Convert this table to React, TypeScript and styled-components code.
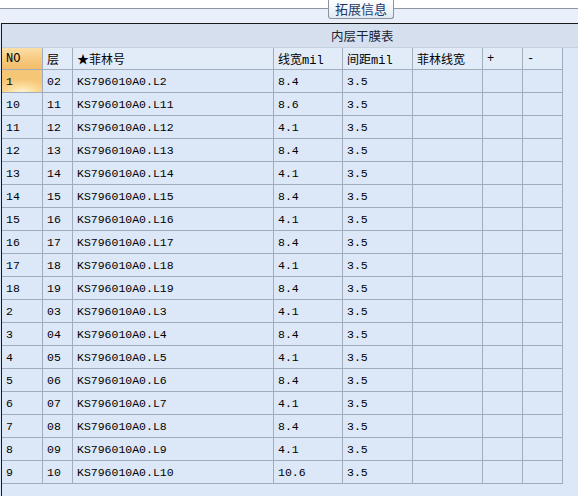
import React from "react";
import styled, { createGlobalStyle, css } from "styled-components";

const Global = createGlobalStyle`
  html, body { margin: 0; padding: 0; background: #ffffff; overflow: hidden; }
  body { width: 578px; height: 496px; }
`;

const Panel = styled.div`
  width: 578px;
  height: 496px;
  display: flex;
  flex-direction: column;
  background: #dce8f8;
  overflow: hidden;
`;

const TopBand = styled.div`
  height: 23px;
  display: flex;
  justify-content: flex-start;
  align-items: flex-start;
  padding-left: 328px;
  background: linear-gradient(
    #ffffff 0px,
    #ffffff 8px,
    #8e98a5 8px,
    #8e98a5 9px,
    #e9f0fa 9px
  );
`;

const LegendButton = styled.div`
  box-sizing: border-box;
  width: 66px;
  height: 19px;
  border: 1px solid #8c939c;
  border-top: none;
  border-radius: 0 0 3px 3px;
  background: linear-gradient(#ffffff, #eef3fa 60%, #dfe8f4);
  display: flex;
  align-items: center;
  justify-content: center;
  font-family: "Noto Sans CJK SC", sans-serif;
  font-size: 13px;
  color: #1d3767;
  line-height: 1;
  padding-bottom: 1px;
`;

const Table = styled.div`
  flex: 1;
  display: flex;
  flex-direction: column;
  margin-left: 1px;
  border-left: 1px solid #1a1a1a;
  border-top: 1px solid #1a1a1a;
  background: #dce8f8;
`;

const TitleRow = styled.div`
  box-sizing: border-box;
  height: 24px;
  display: flex;
  align-items: center;
  padding-left: 329px;
  background: #d5dfed;
  border-bottom: 1px solid #c6d1e0;
  font-family: "Noto Sans CJK SC", sans-serif;
  font-size: 12.5px;
  color: #1b2433;
`;

const Row = styled.div`
  display: grid;
  grid-template-columns: 41px 30px 201px 69px 70px 70px 40px 40px;
  width: 561px;
`;

const cellBase = css`
  box-sizing: border-box;
  border-right: 1px solid #a2adbb;
  border-bottom: 1px solid #a2adbb;
  padding-left: 4px;
  display: flex;
  align-items: center;
  white-space: nowrap;
  overflow: hidden;
  color: #000;
`;

const HeadCell = styled.div<{ $accent?: boolean }>`
  ${cellBase};
  height: 22px;
  font-family: "Liberation Mono", "Noto Sans CJK SC", monospace;
  font-size: 12px;
  background: ${(p) =>
    p.$accent ? "linear-gradient(#fbdfa6, #f6c97f 55%, #f3bd68)" : "#e2ecf9"};
`;

const Cell = styled.div<{ $selected?: boolean }>`
  ${cellBase};
  height: 23px;
  font-family: "Liberation Mono", monospace;
  font-size: 11.5px;
  padding-top: 1px;
  background: ${(p) =>
    p.$selected
      ? "radial-gradient(ellipse 70% 60% at 50% 100%, #fff3d2 0%, #fbd994 55%, #f6c677 100%), #f6c677"
      : "#dce8f8"};
`;

const rows: [string, string, string, string][] = [
  ["1", "02", "KS796010A0.L2", "8.4"],
  ["10", "11", "KS796010A0.L11", "8.6"],
  ["11", "12", "KS796010A0.L12", "4.1"],
  ["12", "13", "KS796010A0.L13", "8.4"],
  ["13", "14", "KS796010A0.L14", "4.1"],
  ["14", "15", "KS796010A0.L15", "8.4"],
  ["15", "16", "KS796010A0.L16", "4.1"],
  ["16", "17", "KS796010A0.L17", "8.4"],
  ["17", "18", "KS796010A0.L18", "4.1"],
  ["18", "19", "KS796010A0.L19", "8.4"],
  ["2", "03", "KS796010A0.L3", "4.1"],
  ["3", "04", "KS796010A0.L4", "8.4"],
  ["4", "05", "KS796010A0.L5", "4.1"],
  ["5", "06", "KS796010A0.L6", "8.4"],
  ["6", "07", "KS796010A0.L7", "4.1"],
  ["7", "08", "KS796010A0.L8", "8.4"],
  ["8", "09", "KS796010A0.L9", "4.1"],
  ["9", "10", "KS796010A0.L10", "10.6"],
];

export default function App() {
  return (
    <>
      <Global />
      <Panel>
        <TopBand>
          <LegendButton>拓展信息</LegendButton>
        </TopBand>
        <Table>
          <TitleRow>内层干膜表</TitleRow>
          <Row>
            <HeadCell $accent>NO</HeadCell>
            <HeadCell>层</HeadCell>
            <HeadCell>★菲林号</HeadCell>
            <HeadCell>线宽mil</HeadCell>
            <HeadCell>间距mil</HeadCell>
            <HeadCell>菲林线宽</HeadCell>
            <HeadCell>+</HeadCell>
            <HeadCell>-</HeadCell>
          </Row>
          {rows.map((r, i) => (
            <Row key={r[2]}>
              <Cell $selected={i === 0}>{r[0]}</Cell>
              <Cell>{r[1]}</Cell>
              <Cell>{r[2]}</Cell>
              <Cell>{r[3]}</Cell>
              <Cell>3.5</Cell>
              <Cell />
              <Cell />
              <Cell />
            </Row>
          ))}
        </Table>
      </Panel>
    </>
  );
}
